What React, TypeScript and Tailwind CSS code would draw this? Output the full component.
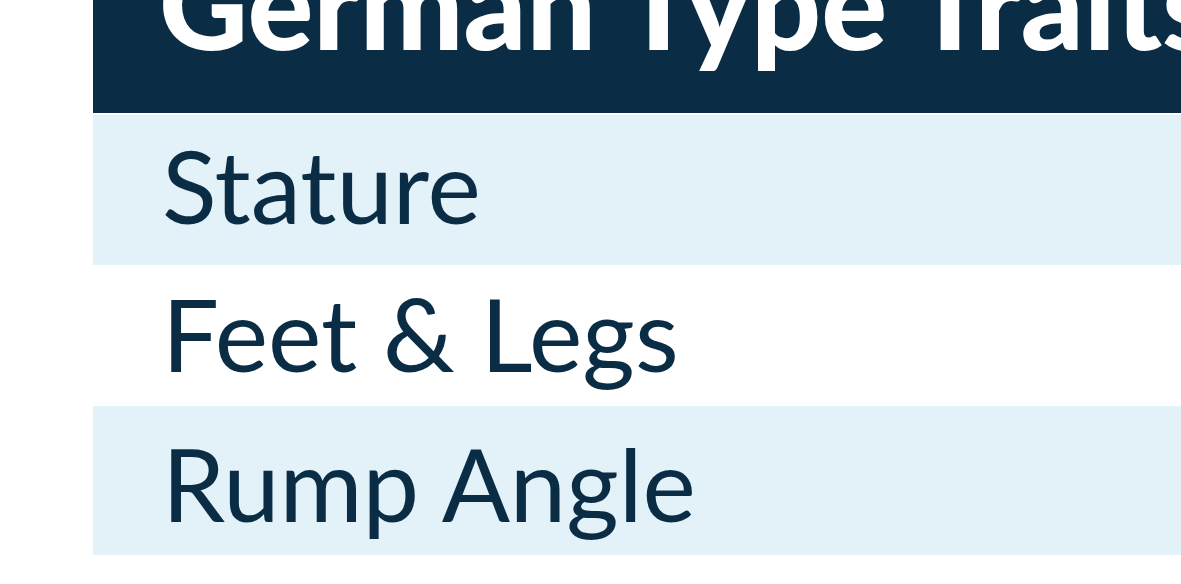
import React from 'react';

const rows = [
  { label: "Stature", shade: true, cls: "h-[150px] pt-[20px]" },
  { label: "Feet & Legs", shade: false, cls: "h-[141px] pt-[18px]" },
  { label: "Rump Angle", shade: true, cls: "h-[149px] pt-[27px]" },
];

export default function App() {
  return (
    <div className="w-[1181px] h-[584px] bg-white overflow-hidden" style={{ fontFamily: 'Lato, "Open Sans", sans-serif' }}>
      <div className="ml-[93px] w-[1200px]">
        {/* Header */}
        <div className="h-[113px] bg-[#0a2d45] overflow-hidden relative">
          <div className="absolute left-[66px] top-[-59px] whitespace-nowrap text-white font-black text-[123px] leading-none">
            German Type Traits
          </div>
        </div>
        <div className="h-[2px] bg-white"></div>

        {/* Rows */}
        {rows.map((r) => (
          <div key={r.label} className={`${r.cls} ${r.shade ? "bg-[#e3f1f8]" : "bg-white"} pl-[69px]`}>
            <div className="text-[#0a2d45] text-[101px] leading-none whitespace-nowrap">{r.label}</div>
          </div>
        ))}
      </div>
    </div>
  );
}
